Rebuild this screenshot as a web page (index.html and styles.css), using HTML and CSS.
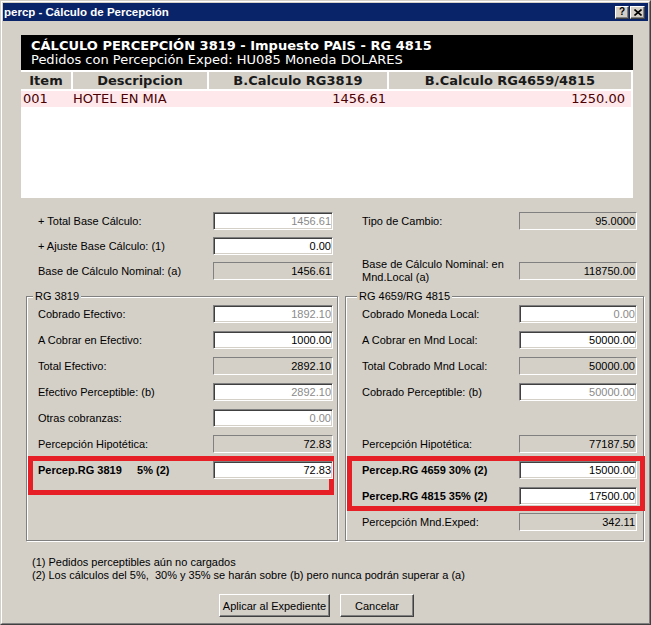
FILE: index.html
```html
<!DOCTYPE html>
<html lang="es">
<head>
    <meta charset="UTF-8">
    <title>percp - Cálculo de Percepción</title>
    <link rel="stylesheet" href="styles.css">
</head>
<body>
<div class="window">
  <div class="frame">
    <div class="titlebar">
      <span class="title">percp - Cálculo de Percepción</span>
      <div class="caption-btns">
        <span class="cbtn help">?</span>
        <span class="cbtn close"><svg width="8" height="7" viewBox="0 0 8 7"><path d="M0.5 0.5L7.5 6.5M7.5 0.5L0.5 6.5" stroke="#000" stroke-width="1.6"/></svg></span>
      </div>
    </div>

    <div class="client">
      <div class="grid">
        <div class="grid-head">
          <div class="gh1">CÁLCULO PERCEPCIÓN 3819 - Impuesto PAIS - RG 4815</div>
          <div class="gh2">Pedidos con Percepción Exped: HU085 Moneda DOLARES</div>
        </div>
        <table class="items">
          <thead>
            <tr><th class="c-item">Item</th><th class="c-desc">Descripcion</th><th class="c-b1">B.Calculo RG3819</th><th class="c-b2">B.Calculo RG4659/4815</th></tr>
          </thead>
          <tbody>
            <tr><td>001</td><td class="desc">HOTEL EN MIA</td><td class="num n1">1456.61</td><td class="num n2">1250.00</td></tr>
          </tbody>
        </table>
      </div>

      <div class="top">
        <div class="col col-l">
          <div class="row"><label>+ Total Base Cálculo:</label><input class="fld dis" value="1456.61" readonly></div>
          <div class="row"><label>+ Ajuste Base Cálculo: (1)</label><input class="fld" value="0.00"></div>
          <div class="row"><label>Base de Cálculo Nominal: (a)</label><input class="fld ro" value="1456.61" readonly></div>
        </div>
        <div class="col col-r">
          <div class="row"><label>Tipo de Cambio:</label><input class="fld ro" value="95.0000" readonly></div>
          <div class="row"></div>
          <div class="row"><label class="two">Base de Cálculo Nominal: en Mnd.Local (a)</label><input class="fld ro" value="118750.00" readonly></div>
        </div>
      </div>

      <div class="groups">
        <fieldset class="grp grp-l">
          <legend>RG 3819</legend>
          <div class="row"><label>Cobrado Efectivo:</label><input class="fld dis" value="1892.10" readonly></div>
          <div class="row"><label>A Cobrar en Efectivo:</label><input class="fld" value="1000.00"></div>
          <div class="row"><label>Total Efectivo:</label><input class="fld ro" value="2892.10" readonly></div>
          <div class="row"><label>Efectivo Perceptible: (b)</label><input class="fld dis" value="2892.10" readonly></div>
          <div class="row"><label>Otras cobranzas:</label><input class="fld dis" value="0.00" readonly></div>
          <div class="row"><label>Percepción Hipotética:</label><input class="fld ro" value="72.83" readonly></div>
          <div class="hl">
            <div class="row"><label class="b">Percep.RG 3819     5% (2)</label><input class="fld" value="72.83"></div>
          </div>
        </fieldset>

        <fieldset class="grp grp-r">
          <legend>RG 4659/RG 4815</legend>
          <div class="row"><label>Cobrado Moneda Local:</label><input class="fld dis" value="0.00" readonly></div>
          <div class="row"><label>A Cobrar en Mnd Local:</label><input class="fld" value="50000.00"></div>
          <div class="row"><label>Total Cobrado Mnd Local:</label><input class="fld ro" value="50000.00" readonly></div>
          <div class="row"><label>Cobrado Perceptible: (b)</label><input class="fld dis" value="50000.00" readonly></div>
          <div class="row"></div>
          <div class="row"><label>Percepción Hipotética:</label><input class="fld ro" value="77187.50" readonly></div>
          <div class="hl">
            <div class="row"><label class="b">Percep.RG 4659 30% (2)</label><input class="fld" value="15000.00"></div>
            <div class="row"><label class="b">Percep.RG 4815 35% (2)</label><input class="fld" value="17500.00"></div>
          </div>
          <div class="row"><label>Percepción Mnd.Exped:</label><input class="fld ro" value="342.11" readonly></div>
        </fieldset>
      </div>

      <div class="notes">
        <p>(1) Pedidos perceptibles aún no cargados</p>
        <p>(2) Los cálculos del 5%,  30% y 35% se harán sobre (b) pero nunca podrán superar a (a)</p>
      </div>

      <div class="actions">
        <button class="btn btn-apply">Aplicar al Expediente</button>
        <button class="btn btn-cancel">Cancelar</button>
      </div>
    </div>
  </div>
</div>
</body>
</html>
```

FILE: styles.css
```css
* { box-sizing: border-box; }
body { margin: 0; background: #d4d0c8; font-family: "Liberation Sans", Arial, sans-serif; font-size: 11px; color: #000; }

.window { width: 651px; height: 625px; border: 1px solid; border-color: #d4d0c8 #404040 #404040 #d4d0c8; }
.frame { height: 100%; border: 1px solid; border-color: #fff #808080 #808080 #fff; padding: 1px; }

.titlebar { height: 18px; background: #0a246a; color: #fff; display: flex; align-items: center; justify-content: space-between; padding: 0 3px 0 1px; }
.title { font-weight: bold; font-size: 11.5px; }
.caption-btns { display: flex; gap: 1px; }
.cbtn { width: 14px; height: 13px; background: #d4d0c8; border: 1px solid; border-color: #fff #404040 #404040 #fff;
    box-shadow: inset -1px -1px #808080; display: flex; align-items: center; justify-content: center;
    color: #000; font-weight: bold; font-size: 10px; line-height: 1; }
.cbtn.close { width: 15px; }

.client { padding: 14px 0 0 18px; }

/* grid */
.grid { width: 612px; height: 163px; background: #fff; }
.grid-head { height: 35px; background: #000; color: #fff; font-family: "DejaVu Sans", Verdana, sans-serif; font-size: 13px; line-height: 14px; padding: 4px 10px 0; }
.gh1 { font-weight: bold; }
.items { margin-top: 2px; width: 610px; border-collapse: separate; border-spacing: 0; table-layout: fixed;
    font-family: "DejaVu Sans", Verdana, sans-serif; font-size: 13px; }
.items th { height: 19px; padding: 0; background: #d4d0c8; color: #1a1a1a; font-weight: bold; border-bottom: 2px solid #fff; line-height: 17px; }
.items th + th { border-left: 2px solid #fff; }
.c-item { width: 50px; }
.c-desc { width: 136px; }
.c-b1 { width: 180px; }
.c-b2 { width: 244px; }
.items td { height: 16px; padding: 0 0 0 2px; background: #ffe8ec; color: #4a0000; line-height: 16px; white-space: nowrap; }
.items td.desc { padding-left: 2px; }
.items td.num { text-align: right; }
.items td.n1 { padding-right: 1px; }
.items td.n2 { padding-right: 6px; }

/* fields */
.row { display: flex; align-items: center; justify-content: space-between; height: 18px; }
.row label { flex: 1; white-space: pre; }
.row label.two { white-space: normal; line-height: 13px; padding-right: 10px; }
.row label.b { font-weight: bold; }
.fld { width: 120px; height: 18px; margin: 0; padding: 0 1px 0 2px; font: 11px "Liberation Sans", Arial, sans-serif; text-align: right; color: #000;
    background: #fff; border: 1px solid; border-color: #808080 #fff #fff #808080;
    box-shadow: inset 1px 1px #404040, inset -1px -1px #d4d0c8; outline: none; }
.fld.dis { color: #8a8a8a; }
.fld.ro { background: #d4d0c8; box-shadow: none; }

.top { display: flex; margin-top: 14px; padding-left: 17px; }
.top .row + .row { margin-top: 7px; }
.col-l { width: 295px; margin-right: 29px; }
.col-r { width: 275px; }
.col-r .fld { width: 118px; }

/* group boxes */
.groups { display: flex; margin-top: 10px; }
.grp { margin: 0; min-width: 0; border: 1px solid #808080; box-shadow: inset 1px 1px #fff, 1px 1px #fff; }
.grp legend { margin-left: -5px; padding: 0 2px; line-height: 13px; background: #d4d0c8; }
.grp .row + .row { margin-top: 8px; }
.grp-l { width: 312px; margin-left: 5px; padding: 2px 4px 9px 11px; }
.grp-r { width: 299px; margin-left: 7px; padding: 2px 6px 9px 16px; }
.grp-r .fld { width: 118px; }

.hl { border: 5px solid #e61e25; margin-top: 3px; }
.grp-l .hl { margin-right: -1px; margin-left: -10px; padding-bottom: 11px; }
.grp-l .hl .row { margin: 0 -4px 0 5px; }
.grp-r .hl { margin-right: -8px; margin-left: -15px; padding-bottom: 1px; }
.grp-r .hl .row { margin-left: 10px; margin-right: 3px; }
.grp-r .hl .row + .row { margin-top: 8px; }
.grp-r .hl + .row { margin-top: 2px; }

/* notes and buttons */
.notes { margin-top: 15px; padding-left: 11px; line-height: 13px; }
.notes p { margin: 0; white-space: pre; }
.actions { margin-top: 12px; padding-left: 198px; display: flex; gap: 10px; }
.btn { height: 23px; padding: 0; font: 11px "Liberation Sans", Arial, sans-serif; color: #000; background: #d4d0c8;
    border: 1px solid; border-color: #fff #404040 #404040 #fff; box-shadow: inset -1px -1px #808080; }
.btn-apply { width: 111px; }
.btn-cancel { width: 74px; }
```
